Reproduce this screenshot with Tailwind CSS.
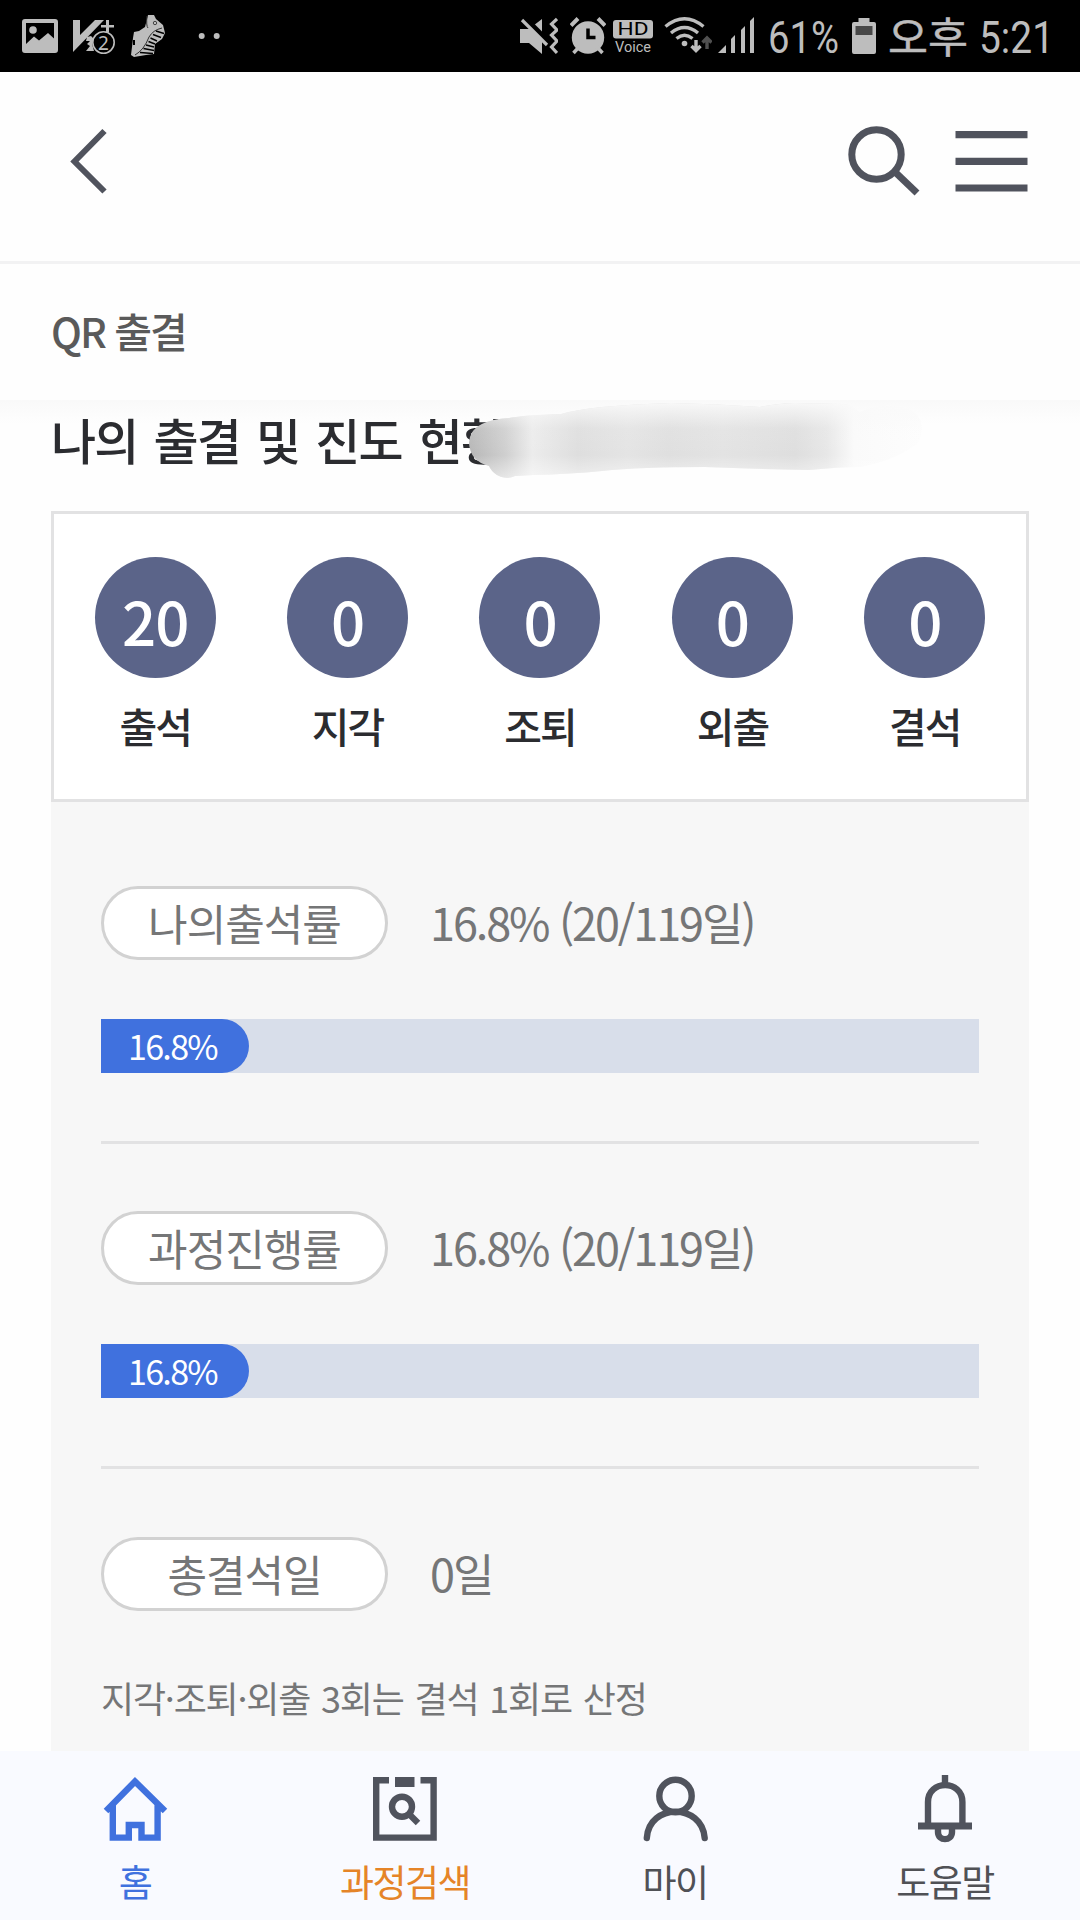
<!DOCTYPE html>
<html lang="ko">
<head>
<meta charset="utf-8">
<title>QR 출결</title>
<script src="https://cdn.jsdelivr.net/npm/@tailwindcss/browser@4"></script>
</head>
<body class="bg-[#fefefe]">
<div class="flex h-[1920px] w-[1080px] flex-col overflow-hidden font-['Noto_Sans_CJK_KR',sans-serif]">

  <!-- status bar -->
  <div class="flex h-[72px] shrink-0 items-center bg-black pl-[22px] text-[#bdbdbd]">
    <svg class="h-[72px] w-[36px] shrink-0" viewBox="22 0 36 72" fill="currentColor"><path fill-rule="evenodd" d="M25 19H55Q58 19 58 22V50Q58 53 55 53H25Q22 53 22 50V22Q22 19 25 19ZM26 23V44L34 36.500L39 40.500L48 33L54 38.500V23Z"/><circle cx="33" cy="30" r="3.800"/></svg>
    <svg class="ml-[14px] h-[72px] w-[44px] shrink-0" viewBox="72 0 44 72" fill="currentColor"><path d="M73 20H80V35L95 20H104L73 52Z"/><path d="M106 20h3v5h5v2.500h-5v5h-3v-5h-5v-2.500h5ZM87 37l4-1 3 3-2 5 2 7-8 0 4-5-3-2 3-3-4 0Z"/><circle cx="103.500" cy="42.500" r="10.700" fill="#000" stroke="currentColor" stroke-width="1.600"/><text x="103.500" y="49.500" text-anchor="middle" font-family="Noto Sans" font-size="19">2</text></svg>
    <svg class="ml-[14px] h-[72px] w-[36px] shrink-0" viewBox="130 0 36 72" fill="currentColor"><path d="M148 15L154 15L156 19L163 25L165 33L162 39L155 44L154 54L146 55L134 57L131 55L132 47L133 38L134 32L139 31L145 27Z"/><path d="M147 16Q146 26 148 28M135 55Q144 50 149 37Q153 30 162 28" fill="none" stroke="#333" stroke-width="1"/><path d="M156 31L164 33.500M153 34.500L161 37.500M150.500 38L157 41M148.500 41.500L155 44M146 45L154 47M143.500 48.500L154 50.500M140 52.500L153 53.500" stroke="#000" stroke-width="1.400"/><circle cx="155" cy="23" r="1.700" fill="none" stroke="#444"/><path d="M134 40v5" stroke="#000" stroke-width="2"/></svg>
    <svg class="ml-[32px] h-[72px] w-[24px] shrink-0" viewBox="198 0 24 72" fill="currentColor"><circle cx="201.700" cy="36" r="3"/><circle cx="216.700" cy="36" r="3"/></svg>

    <svg class="ml-[298px] h-[72px] w-[38px] shrink-0" viewBox="520 0 38 72" fill="currentColor"><path d="M520 29H529L542 19V54L529 43H520Z"/><path d="M524 17L551 44" stroke="#000" stroke-width="5"/><path d="M522 20L547 45" stroke="currentColor" stroke-width="3.200"/><path d="M557 19L551.500 24L557 30L551.500 35L557 41L551.500 47L557 53" fill="none" stroke="currentColor" stroke-width="3.200"/></svg>
    <svg class="ml-[12px] h-[72px] w-[36px] shrink-0" viewBox="570 0 36 72" fill="currentColor"><circle cx="588" cy="37.500" r="16.200"/><path d="M571 25.500L578 18.500M605 25.500L598 18.500" stroke="currentColor" stroke-width="4"/><path d="M573.500 53L579 47M602.500 53L597 47" stroke="currentColor" stroke-width="3.500"/><path d="M588 28.500V37.500H595.500" stroke="#000" stroke-width="3.500" fill="none"/></svg>
    <svg class="ml-[7px] h-[72px] w-[40px] shrink-0" viewBox="613 0 40 72" fill="currentColor"><rect x="613" y="20" width="40" height="18.500" rx="3"/><text x="633" y="35.200" text-anchor="middle" textLength="31" lengthAdjust="spacingAndGlyphs" font-family="Roboto" font-size="17.500" fill="#000">HD</text><text x="633" y="52" text-anchor="middle" textLength="36" lengthAdjust="spacingAndGlyphs" font-family="Roboto" font-size="14.500">Voice</text></svg>
    <svg class="ml-[11px] h-[72px] w-[48px] shrink-0" viewBox="664 0 48 72" fill="none" stroke="currentColor" stroke-width="3.400"><path d="M665.500 26.500Q684.500 11 703.500 26.500M671 33Q684.500 22 698 33M676.500 38.500Q684.500 32 692.500 38.500"/><circle cx="684.500" cy="43.500" r="2.800" fill="currentColor" stroke="none"/><path d="M696 40V50M691.500 46L696 50.500L700.500 46"/><path d="M707 49V39M702.500 42.500L707 38L711.500 42.500" stroke="#505050"/></svg>
    <svg class="ml-[6px] h-[72px] w-[37px] shrink-0" viewBox="718 0 37 72" fill="currentColor"><path d="M718 53L726 45V53ZM731 39L735 35V53H731ZM741 30L745 26V53H741ZM750 21L754 17V53H750Z"/></svg>
    <svg class="ml-[14px] h-[72px] w-[72px] shrink-0 overflow-visible" viewBox="769 0 72 72" fill="currentColor"><text x="768" y="53" textLength="71" lengthAdjust="spacingAndGlyphs" font-family="Roboto" font-size="45" font-weight="400">61%</text></svg>
    <svg class="ml-[11px] h-[72px] w-[24px] shrink-0" viewBox="852 0 24 72" fill="currentColor"><path d="M858.500 18H869.500V22H874Q876 22 876 24V52Q876 54 874 54H854Q852 54 852 52V24Q852 22 854 22H858.500Z"/><path d="M855.500 26H872.500V35H855.500Z" fill="#484848"/></svg>
    <svg class="ml-[12px] h-[72px] w-[180px] shrink-0" viewBox="888 0 180 72" fill="currentColor"><text x="888" y="52.500" textLength="80" lengthAdjust="spacingAndGlyphs" font-family="Noto Sans CJK KR" font-size="42" stroke="currentColor" stroke-width=".5">오후</text><text x="979" y="53" textLength="75" lengthAdjust="spacingAndGlyphs" font-family="Roboto" font-size="45" font-weight="400">5:21</text></svg>
  </div>

  <!-- header -->
  <header class="flex h-[192px] shrink-0 items-start justify-between border-b-[3px] border-[#f2f2f3] pr-[52px] pl-[70px] pt-[52px] text-[#50535d]">
    <svg class="h-[74px] w-[40px]" viewBox="70 124 40 74" fill="none" stroke="currentColor" stroke-width="6"><path d="M104.500 131L74.500 161.500L104.500 191.500"/></svg>
    <div class="flex gap-[32px]">
      <svg class="h-[74px] w-[76px]" viewBox="846 124 76 74" fill="none" stroke="currentColor" stroke-width="7"><circle cx="876.500" cy="154.500" r="24.700"/><path d="M894 171L917 193"/></svg>
      <svg class="h-[74px] w-[74px]" viewBox="954 124 74 74" stroke="currentColor" stroke-width="7.200"><path d="M955.500 134.700H1027.500M955.500 161.300H1027.500M955.500 188H1027.500"/></svg>
    </div>
  </header>
  <div class="flex h-[136px] shrink-0 items-center pl-[51px] pb-[5px] text-[41px] leading-[60px] font-medium tracking-[-2px] text-[#5a5a5a]">QR 출결</div>

  <!-- attendance -->
  <main class="h-[1351px] shrink-0 overflow-hidden bg-linear-to-b from-[#f9f9f9] to-[#fefefe] to-[24px] px-[51px]">
    <div class="relative h-[111px] pt-[3px]">
      <h1 class="text-[49px] leading-[72px] font-medium tracking-[-1.800px] [word-spacing:4px] whitespace-nowrap text-[#2b2c30]">나의 출결 및 진도 현황</h1>
      <svg class="absolute top-[-5px] left-[409px] h-[90px] w-[480px]" viewBox="460 395 480 90">
        <defs>
          <linearGradient id="smear" gradientUnits="userSpaceOnUse" x1="469" x2="922" y1="0" y2="0"><stop offset="0" stop-color="#b7b7b7"/><stop offset=".08" stop-color="#cfcfcf"/><stop offset=".14" stop-color="#ececec"/><stop offset=".19" stop-color="#e5e5e5"/><stop offset=".24" stop-color="#dedede"/><stop offset=".35" stop-color="#e4e4e4"/><stop offset=".44" stop-color="#dfdfdf"/><stop offset=".56" stop-color="#e3e3e3"/><stop offset=".72" stop-color="#dedede"/><stop offset=".79" stop-color="#e7e7e7"/><stop offset=".85" stop-color="#fafafa"/><stop offset="1" stop-color="#fdfdfd"/></linearGradient>
          <linearGradient id="fade" gradientUnits="userSpaceOnUse" x1="0" x2="0" y1="402" y2="478"><stop offset="0" stop-color="#fafafa" stop-opacity=".95"/><stop offset=".35" stop-color="#f8f8f8" stop-opacity=".1"/><stop offset=".7" stop-color="#fff" stop-opacity="0"/><stop offset="1" stop-color="#fff" stop-opacity=".5"/></linearGradient>
          <path id="stroke" d="M469 443Q470 429 482 424Q492 419 509 418Q525 415 561 414Q575 410 602 407Q635 404 671 403Q720 404 760 407Q780 403 795 403L843 404Q854 405 859 412Q880 404 895 406Q922 408 922 430Q920 445 912 447Q895 460 860 467Q840 467 809 470Q750 469 705 467Q640 467 602 471Q570 474 533 475L515 476Q505 480 497 475Q491 471 489 466Q470 461 469 443Z"/>
        </defs>
        <use href="#stroke" fill="url(#smear)"/><use href="#stroke" fill="url(#fade)"/>
      </svg>
    </div>

    <section class="grid h-[291px] w-[978px] grid-cols-5 border-[3px] border-[#e2e2e3] bg-white px-[5px] pt-[43px] text-center font-medium">
      <div class="flex flex-col items-center"><b class="h-[121px] w-[121px] rounded-full bg-[#5b6489] text-[60px] leading-[125px] font-medium tracking-[-1px] text-white">20</b><span class="mt-[17px] text-[41px] leading-[60px] tracking-[-2px] text-[#2b2c30]">출석</span></div>
      <div class="flex flex-col items-center"><b class="h-[121px] w-[121px] rounded-full bg-[#5b6489] text-[60px] leading-[125px] font-medium tracking-[-1px] text-white">0</b><span class="mt-[17px] text-[41px] leading-[60px] tracking-[-2px] text-[#2b2c30]">지각</span></div>
      <div class="flex flex-col items-center"><b class="h-[121px] w-[121px] rounded-full bg-[#5b6489] text-[60px] leading-[125px] font-medium tracking-[-1px] text-white">0</b><span class="mt-[17px] text-[41px] leading-[60px] tracking-[-2px] text-[#2b2c30]">조퇴</span></div>
      <div class="flex flex-col items-center"><b class="h-[121px] w-[121px] rounded-full bg-[#5b6489] text-[60px] leading-[125px] font-medium tracking-[-1px] text-white">0</b><span class="mt-[17px] text-[41px] leading-[60px] tracking-[-2px] text-[#2b2c30]">외출</span></div>
      <div class="flex flex-col items-center"><b class="h-[121px] w-[121px] rounded-full bg-[#5b6489] text-[60px] leading-[125px] font-medium tracking-[-1px] text-white">0</b><span class="mt-[17px] text-[41px] leading-[60px] tracking-[-2px] text-[#2b2c30]">결석</span></div>
    </section>

    <section class="h-[949px] w-[978px] bg-[#f7f7f7] px-[50px] pt-[84px] font-normal text-[#757677]">
      <div class="h-[258px] border-b-[3px] border-[#e2e2e3]">
        <div class="flex h-[74px] items-center gap-[42px]">
          <div class="h-[74px] w-[287px] rounded-full border-[3px] border-[#d2d2d2] bg-white text-center text-[43px] leading-[67px] tracking-[-1px]">나의출석률</div>
          <div class="pb-[3px] text-[45px] leading-[70px] tracking-[-2.100px]">16.8% (20/119일)</div>
        </div>
        <div class="mt-[59px] h-[54px] bg-[#d8deea]"><div class="h-full w-[148px] rounded-r-full bg-[#4071de] pl-[27px] text-[34px] leading-[54px] tracking-[-1.700px] text-white">16.8%</div></div>
      </div>
      <div class="h-[325px] border-b-[3px] border-[#e2e2e3] pt-[67px]">
        <div class="flex h-[74px] items-center gap-[42px]">
          <div class="h-[74px] w-[287px] rounded-full border-[3px] border-[#d2d2d2] bg-white text-center text-[43px] leading-[67px] tracking-[-1px]">과정진행률</div>
          <div class="pb-[3px] text-[45px] leading-[70px] tracking-[-2.100px]">16.8% (20/119일)</div>
        </div>
        <div class="mt-[59px] h-[54px] bg-[#d8deea]"><div class="h-full w-[148px] rounded-r-full bg-[#4071de] pl-[27px] text-[34px] leading-[54px] tracking-[-1.700px] text-white">16.8%</div></div>
      </div>
      <div class="pt-[68px]">
        <div class="flex h-[74px] items-center gap-[42px]">
          <div class="h-[74px] w-[287px] rounded-full border-[3px] border-[#d2d2d2] bg-white text-center text-[43px] leading-[67px] tracking-[-1px]">총결석일</div>
          <div class="pb-[3px] text-[45px] leading-[70px] tracking-[-2.100px]">0일</div>
        </div>
        <p class="mt-[60px] text-[36px] leading-[52px] tracking-[-1.200px] [word-spacing:2px]">지각·조퇴·외출 3회는 결석 1회로 산정</p>
      </div>
    </section>
  </main>

  <!-- bottom navigation -->
  <nav class="grid h-[169px] shrink-0 grid-cols-4 bg-[#f9faff] pt-[19px] text-[37px] leading-[54px] font-normal tracking-[-1.500px] text-[#505156]">
    <div class="flex flex-col items-center gap-[8px] text-[#4071de]">
      <svg class="h-[76px] w-[72px]" viewBox="99 1770 72 76" fill="none" stroke="currentColor" stroke-width="6.400"><path d="M106 1811L135 1781.500L165 1811M112.800 1804V1837.600H128.800V1825H141.500V1837.600H157.600V1804"/></svg>
      <span>홈</span>
    </div>
    <div class="flex flex-col items-center gap-[8px]">
      <svg class="h-[76px] w-[72px] text-[#50535d]" viewBox="369 1770 72 76" fill="none" stroke="currentColor" stroke-width="6.400"><path d="M389 1780.200H376.200V1837.600H433.600V1780.200H420.500"/><path d="M395 1782H414.500" stroke-width="10"/><circle cx="402" cy="1806.700" r="10"/><path d="M409 1814L418 1823"/></svg>
      <span class="text-[#e58428]">과정검색</span>
    </div>
    <div class="flex flex-col items-center gap-[8px]">
      <svg class="h-[76px] w-[72px] text-[#50535d]" viewBox="639 1770 72 76" fill="none" stroke="currentColor" stroke-width="6.400"><circle cx="675.500" cy="1796" r="16.200"/><path d="M646.800 1838C649 1803 702 1803 704.700 1838" stroke-linecap="round"/></svg>
      <span>마이</span>
    </div>
    <div class="flex flex-col items-center gap-[8px]">
      <svg class="h-[76px] w-[72px] text-[#50535d]" viewBox="910 1770 72 76" fill="none" stroke="currentColor" stroke-width="6.400"><path d="M946 1775V1784M929 1825V1802C929 1779.500 963.400 1779.500 963.400 1802V1825M939 1828V1832C939 1841.500 953 1841.500 953 1832V1828"/><path d="M919 1826H973" stroke-width="7"/></svg>
      <span>도움말</span>
    </div>
  </nav>
</div>
</body>
</html>
